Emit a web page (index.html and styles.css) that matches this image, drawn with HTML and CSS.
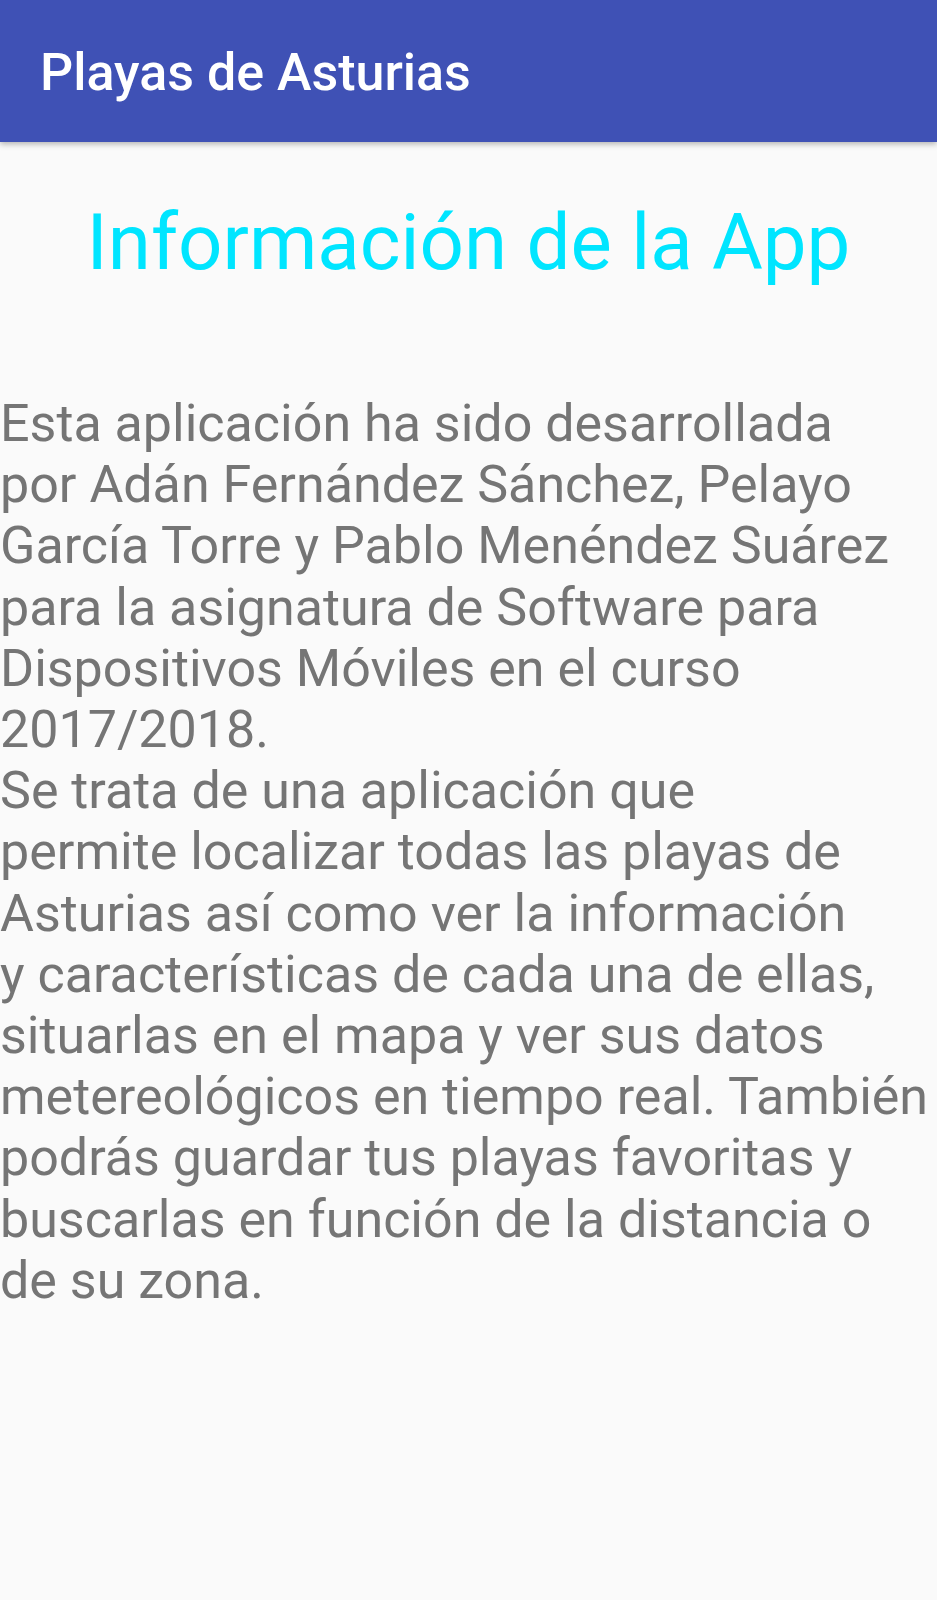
FILE: index.html
```html
<!DOCTYPE html>
<html lang="es">
<head>
<meta charset="utf-8">
<title>Playas de Asturias</title>
<link rel="stylesheet" href="styles.css">
</head>
<body>
<header class="toolbar">
  <h1 class="toolbar-title">Playas de Asturias</h1>
</header>
<main class="content">
  <h2 class="heading">Información de la App</h2>
  <p class="body-text">Esta aplicación ha sido desarrollada<br>por Adán Fernández Sánchez, Pelayo<br>García Torre y Pablo Menéndez Suárez<br>para la asignatura de Software para<br>Dispositivos Móviles en el curso<br>2017/2018.<br>Se trata de una aplicación que<br>permite localizar todas las playas de<br>Asturias así como ver la información<br>y características de cada una de ellas,<br>situarlas en el mapa y ver sus datos<br>metereológicos en tiempo real. También<br>podrás guardar tus playas favoritas y<br>buscarlas en función de la distancia o<br>de su zona.</p>
</main>
</body>
</html>
```
FILE: styles.css
```css
html, body {
  margin: 0;
  padding: 0;
  background: #fafafa;
  font-family: Roboto, "Noto Sans", sans-serif;
}
body {
  width: 937px;
  min-height: 1600px;
  overflow: hidden;
}
.toolbar {
  height: 142px;
  background: #3f51b5;
  display: flex;
  align-items: center;
  padding-left: 40px;
  padding-top: 4px;
  box-sizing: border-box;
  box-shadow: 0 2px 6px rgba(0,0,0,0.3);
  position: relative;
  z-index: 1;
}
.toolbar-title {
  margin: 0;
  color: #ffffff;
  font-size: 52px;
  font-weight: 500;
  line-height: 60px;
}
.content {
  display: flex;
  flex-direction: column;
}
.heading {
  margin: 55px 0 0 0;
  text-align: center;
  color: #00e5ff;
  font-size: 78px;
  font-weight: 400;
  line-height: 92px;
}
.body-text {
  margin: 104px 0 0 0;
  color: #757575;
  font-size: 52px;
  line-height: 61.2px;
  white-space: nowrap;
}
```
